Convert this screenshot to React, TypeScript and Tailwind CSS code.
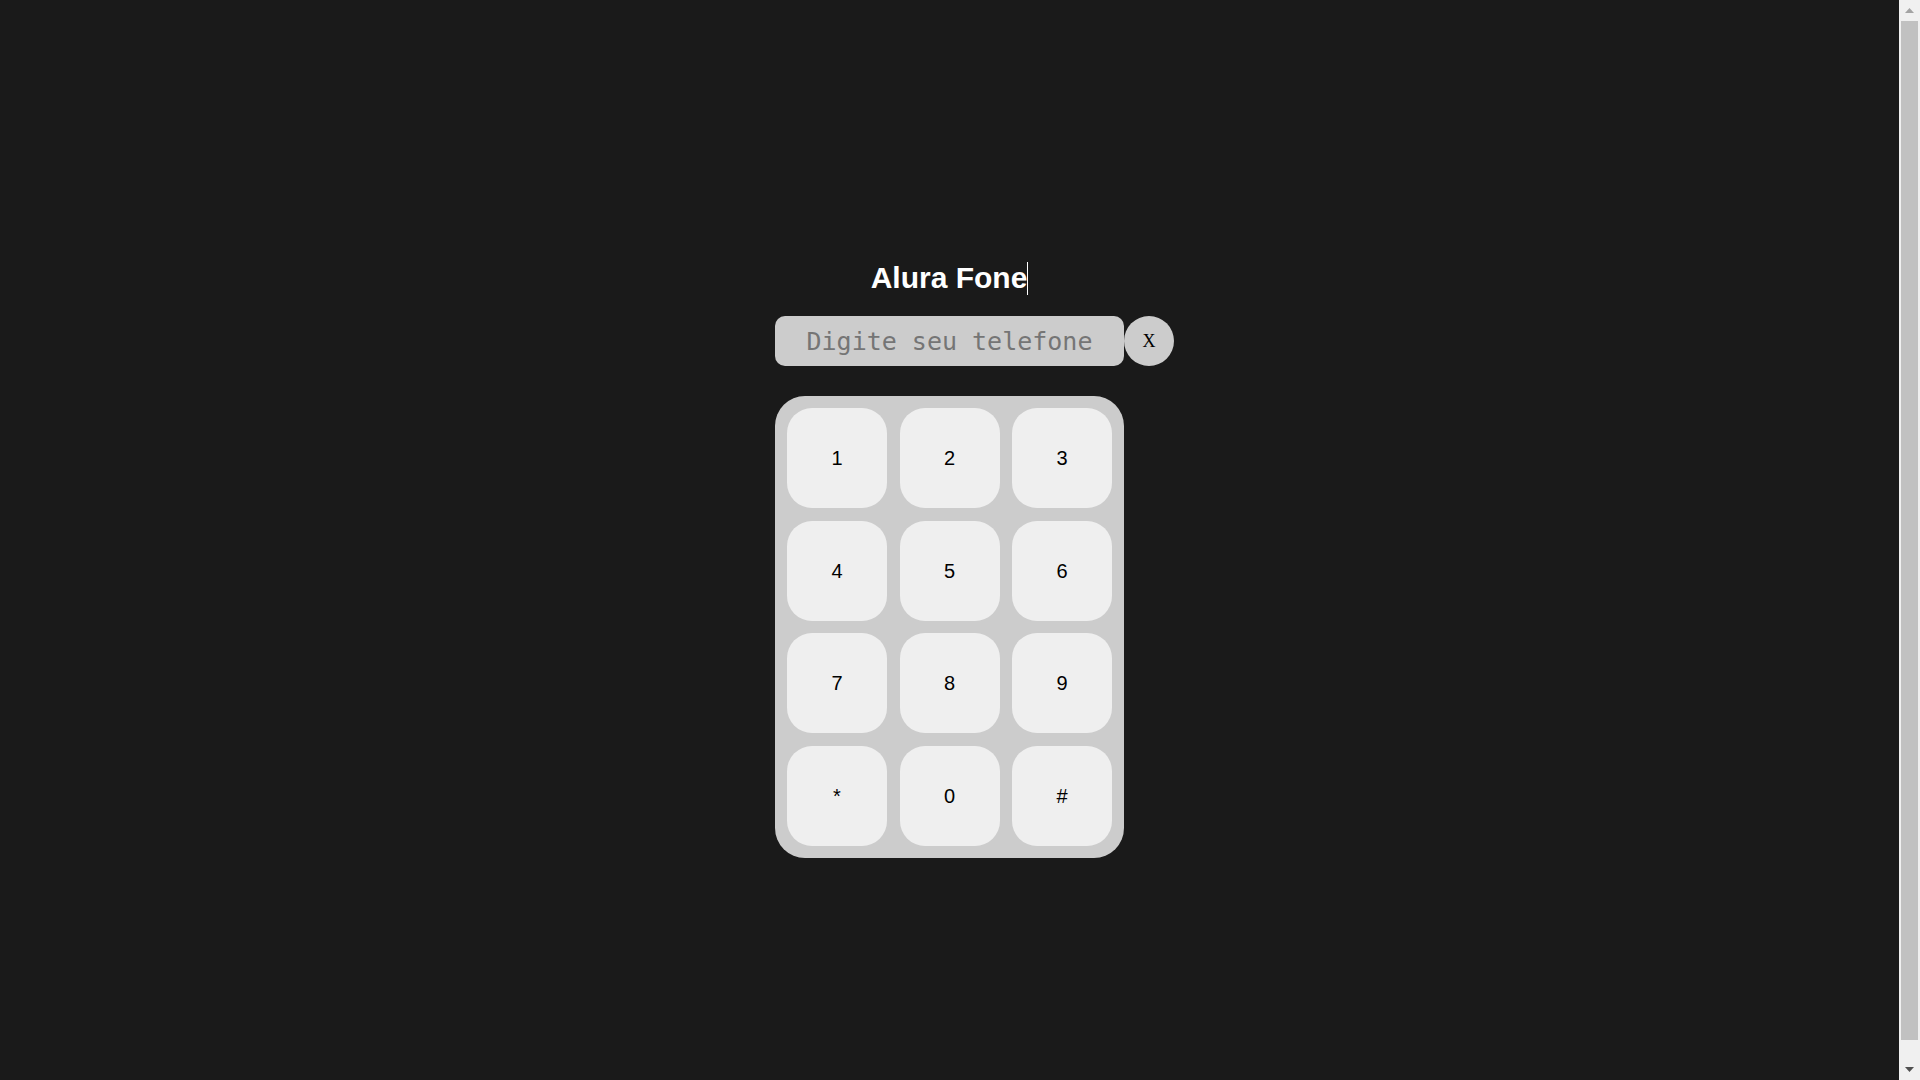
import React from "react";

const keys = ["1", "2", "3", "4", "5", "6", "7", "8", "9", "*", "0", "#"];

const App = () => {
  return (
    <div className="w-full h-[1080px] overflow-hidden flex bg-[#1a1a1a]">
      <div className="w-[1899px] flex flex-col items-center pt-[261px]">
        <h1 className="flex items-center text-[30px] leading-[34px] font-bold text-white font-['Liberation_Sans',Arial,sans-serif]">
          <span>Alura Fone</span>
          <span className="w-px h-[33px] bg-white" />
        </h1>

        <div className="flex mt-[21px]">
          <div className="w-[50px]" />
          <input
            type="text"
            placeholder="Digite seu telefone"
            className="w-[349px] h-[50px] rounded-[10px] bg-[#cccccc] text-center text-[25px] text-black placeholder:text-[#757575] outline-none font-['DejaVu_Sans_Mono',monospace]"
          />
          <button className="w-[50px] h-[50px] rounded-full bg-[#cccccc] text-[18px] text-black font-['Liberation_Serif','Times_New_Roman',serif]">
            X
          </button>
        </div>

        <div className="mt-[30px] w-[349px] grid grid-cols-3 gap-[12.5px] p-3 bg-[#cccccc] rounded-[30px]">
          {keys.map((k) => (
            <button
              key={k}
              className="h-[100px] rounded-[25px] bg-[#efefef] text-[20px] text-black font-['Liberation_Sans',Arial,sans-serif]"
            >
              {k}
            </button>
          ))}
        </div>
      </div>

      {/* scrollbar strip */}
      <div className="w-[21px] h-full bg-[#f0f0f0] flex flex-col items-center">
        <div className="h-[21px] flex items-center justify-center">
          <svg width="9" height="5" viewBox="0 0 9 5">
            <path d="M0 5 L4.5 0 L9 5 Z" fill="#a3a3a3" />
          </svg>
        </div>
        <div className="w-[17px] flex-1 bg-[#c1c1c1]" />
        <div className="h-[19px]" />
        <div className="h-[21px] flex items-center justify-center">
          <svg width="9" height="5" viewBox="0 0 9 5">
            <path d="M0 0 L9 0 L4.5 5 Z" fill="#505050" />
          </svg>
        </div>
      </div>
    </div>
  );
};

export default App;
